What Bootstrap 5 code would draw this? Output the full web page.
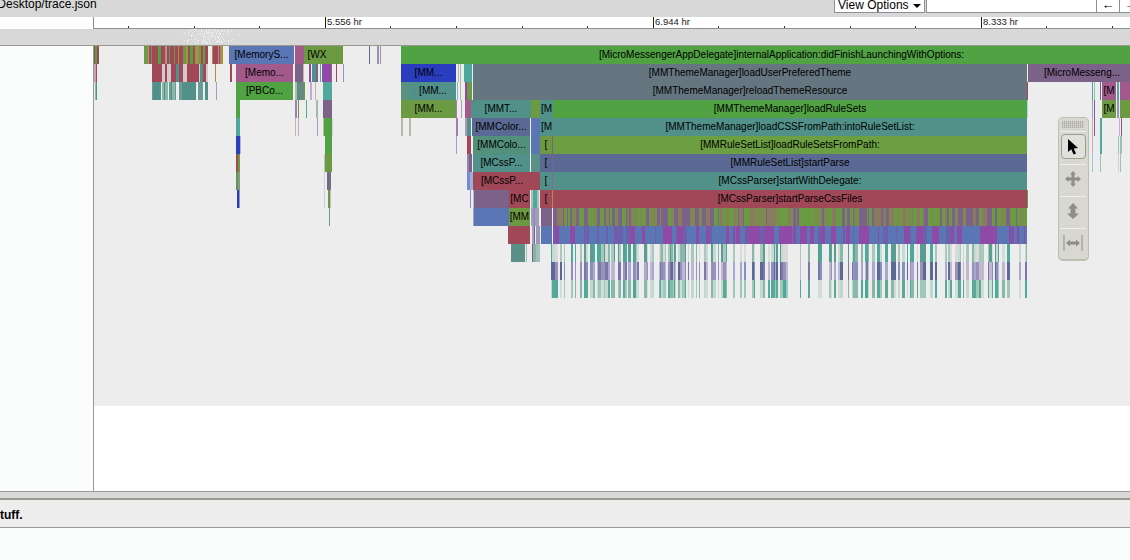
<!DOCTYPE html>
<html lang="en">
<head>
  <meta charset="UTF-8" />
  <title>trace.json</title>
  <link href="https://cdn.jsdelivr.net/npm/bootstrap@5.3.0/dist/css/bootstrap.min.css" rel="stylesheet" />
  <style>
    html, body { height: 560px; overflow: hidden; }
    body { font-family: "Liberation Sans", Arial, sans-serif; background: #fbfdfc; color: #000; }
    .tr-head { height: 17px; background: #d8d8d8; overflow: hidden; }
    .tr-file { font-size: 12px; line-height: 17px; margin-left: -6px; margin-top: -4px; white-space: nowrap; }
    .tr-actions { margin-right: -12px; flex: none; }
    .tr-opts { width: 91px; height: 17px; margin-top: -4px; padding: 0; font-size: 12px; line-height: 14px; border: 1px solid #8a9098; border-radius: 0; background: #fff; color: #000; flex: none; }
    .tr-search { width: 170px; height: 17px; margin-top: -4px; margin-left: 1px; border: 1px solid #8a9098; border-right: 0; border-radius: 0; background: #fff; padding: 0; flex: none; }
    .tr-step { width: 23px; height: 17px; margin-top: -4px; padding: 0; font-size: 13px; line-height: 14px; border: 1px solid #8a9098; border-right: 0; border-radius: 0; background: #fff; color: #000; flex: none; }
    .tr-caret { display: inline-block; border-top: 4px solid #000; border-left: 4px solid transparent; border-right: 4px solid transparent; vertical-align: 1px; margin-left: 1px; }
    .tr-ruler-row { height: 12px; background: #fff; }
    .tr-ruler-gap { width: 93px; flex: none; }
    .tr-ruler { border-left: 1px solid #8a8a84; border-bottom: 1px solid #8a9098; overflow: hidden; }
    .tr-tick { position: absolute; bottom: 0; width: 1px; height: 2px; background: #333; }
    .tr-tick-major { height: 11px; background: #222; }
    .tr-tick-label { position: absolute; top: -1px; font-size: 9.5px; line-height: 12px; color: #222; }
    .tr-overview { height: 17px; background: #d8d8d8; border-bottom: 1px solid #9c9a90; overflow: hidden; }
    .tr-dot { position: absolute; width: 1px; height: 1px; background: #ececec; }
    .tr-main { height: 445px; }
    .tr-gutter { width: 93px; flex: none; background: #fbfdfc; border-right: 1px solid #9c9a90; box-sizing: content-box; }
    .tr-canvas { background: #fff; overflow: hidden; }
    .tr-track { height: 360px; background: #ededed; }
    .tr-slice { position: absolute; height: 18px; font-size: 10px; line-height: 18px; text-align: center; white-space: nowrap; overflow: hidden; color: #000; }
    .tr-tools { position: absolute; left: 964px; top: 71px; width: 31px; height: 144px; background: #d8d8d0; border: 1px solid #bcc0b0; border-bottom-width: 2px; border-radius: 5px; padding: 1px 2px 0 1px; }
    .tr-grip { height: 7px; margin: 2px 2px 3px; flex: none; background-image: repeating-linear-gradient(90deg, #b4b4ac 0 1px, transparent 1px 2px), repeating-linear-gradient(0deg, #c8c8c0 0 1px, transparent 1px 2px); }
    .tr-tool { height: 32px; flex: none; border-top: 1px solid #f0f0ea; padding-bottom: 3px; }
    .tr-tool-first { height: 33px; padding: 2px 0 0; }
    .tr-tool-on { border: 1px solid #9c9e8c; border-radius: 4px; background: #dfe1da; width: 25px; height: 25px; }
    .tr-split { height: 9px; background: #d8d8d8; border-top: 1px solid #9c9a90; border-bottom: 2px solid #9c9890; }
    .tr-panel-head { height: 28px; background: #ededed; border-bottom: 1px solid #9c9a90; font-size: 12px; font-weight: 700; line-height: 30px; overflow: hidden; }
    .tr-panel-head span { margin-left: -8px; }
  </style>
</head>
<body>
  <div class="tr-head d-flex">
    <div class="tr-file">/Desktop/trace.json</div>
    <div class="d-flex ms-auto tr-actions">
      <button type="button" class="tr-opts">View Options <span class="tr-caret"></span></button>
      <input type="text" class="tr-search" aria-label="Search" />
      <button type="button" class="tr-step">←</button>
      <button type="button" class="tr-step">→</button>
    </div>
  </div>

  <div class="tr-ruler-row d-flex">
    <div class="tr-ruler-gap"></div>
    <div id="ruler" class="tr-ruler position-relative flex-grow-1"></div>
  </div>

  <div id="overview" class="tr-overview position-relative"></div>

  <div class="tr-main d-flex">
    <div class="tr-gutter"></div>
    <div class="tr-canvas position-relative flex-grow-1">
      <div id="track" class="tr-track position-relative"></div>
      <div class="tr-tools d-flex flex-column">
        <div class="tr-grip"></div>
        <div class="tr-tool tr-tool-first d-flex justify-content-center">
          <div class="tr-tool-on d-flex align-items-center justify-content-center">
            <svg width="14" height="18" viewBox="0 0 14 18"><path d="M2 1 L2 14 L5.2 11.2 L7.6 16.5 L10 15.4 L7.7 10.4 L12 10 Z" fill="#000"/></svg>
          </div>
        </div>
        <div class="tr-tool d-flex align-items-center justify-content-center">
          <svg width="18" height="18" viewBox="0 0 18 18"><path d="M9 1 L12 4.5 H10.5 V7.5 H13.5 V6 L17 9 L13.5 12 V10.5 H10.5 V13.5 H12 L9 17 L6 13.5 H7.5 V10.5 H4.5 V12 L1 9 L4.5 6 V7.5 H7.5 V4.5 H6 Z" fill="#8e8e84"/></svg>
        </div>
        <div class="tr-tool d-flex align-items-center justify-content-center">
          <svg width="14" height="18" viewBox="0 0 14 18"><path d="M7 1 L12 6.5 H9.5 V11.5 H13 L7 17 L1 11.5 H4.5 V6.5 H2 Z" fill="#8e8e84"/></svg>
        </div>
        <div class="tr-tool d-flex align-items-center justify-content-center">
          <svg width="20" height="16" viewBox="0 0 20 16"><path d="M1 0 V16 M19 0 V16" stroke="#8e8e84" fill="none"/><path d="M3 8 L7 4.5 V6.5 H13 V4.5 L17 8 L13 11.5 V9.5 H7 V11.5 Z" fill="#8e8e84"/></svg>
        </div>
      </div>
    </div>
  </div>

  <div class="tr-split"></div>
  <div class="tr-panel-head"><span>Stuff.</span></div>

  <script>
    // colours of the trace viewer
    const green = '#50a243', olive = '#6c9a42', red = '#a04858', pink = '#a2598c', purple = '#8f4aa8';
    const blue = '#5a76b4', navy = '#5a6a94', deep = '#2a3dbf', teal = '#52908a', aqua = '#4ea89b';
    const slate = '#667680', plum = '#7c6288', tan = '#bbb8a6', ochre = '#a89048';

    // [row, from x, to x, colour, label]
    // the two slices that run off the right edge go on past it, their labels stay centred on the full width
    const slices = [
      [0, 229, 294, blue, '[MemoryS...'], [0, 295, 304, pink], [0, 304, 330, olive, '[WX'], [0, 330, 343, olive],
      [0, 369, 370, navy], [0, 377, 379, '#9a90b0'], [0, 380, 381, '#9a90b0'],
      [0, 401, 1162, green, '[MicroMessengerAppDelegate]internalApplication:didFinishLaunchingWithOptions:'],

      [1, 236, 293, pink, '[Memo...'], [1, 295, 303, plum], [1, 303, 304, tan], [1, 309, 311, purple], [1, 312, 316, teal], [1, 316, 318, plum],
      [1, 320, 321, aqua], [1, 322, 331, purple], [1, 331, 332, pink], [1, 336, 337, red], [1, 343, 344, '#9a90c0'], [1, 230, 232, red], [1, 215, 216, ochre],
      [1, 401, 456, deep, '[MM...'], [1, 458, 459, tan], [1, 460, 461, '#9ac0b0'], [1, 464, 472, aqua],
      [1, 473, 1027, slate, '[MMThemeManager]loadUserPreferedTheme'], [1, 1028, 1136, plum, '[MicroMesseng...'],

      [2, 216, 217, '#a89cc0'], [2, 236, 293, green, '[PBCo...'], [2, 295, 297, tan], [2, 297, 300, teal], [2, 300, 304, '#6a8a80'], [2, 304, 305, olive], [2, 310, 312, '#c8a8d0'], [2, 315, 316, tan], [2, 323, 332, aqua],
      [2, 401, 410, '#5c9080'], [2, 410, 456, teal, '[MM...'], [2, 457, 458, '#88b8d8'], [2, 460, 461, tan], [2, 465, 467, purple], [2, 467, 472, olive],
      [2, 473, 1027, slate, '[MMThemeManager]reloadThemeResource'], [2, 1027, 1028, red], [2, 1092, 1093, aqua], [2, 1094, 1095, '#9ac0b0'], [2, 1100, 1101, navy], [2, 1102, 1116, pink, '[M'], [2, 1117, 1119, aqua], [2, 1120, 1130, pink],

      [3, 236, 240, green], [3, 295, 297, '#a080b0'], [3, 298, 299, olive], [3, 306, 307, aqua], [3, 316, 318, '#a0b8b0'], [3, 323, 332, plum],
      [3, 401, 456, olive, '[MM...'], [3, 456, 457, '#a878b8'], [3, 461, 462, '#a89cb8'], [3, 465, 471, pink], [3, 471, 531, teal, '[MMT...'], [3, 531, 540, olive], [3, 540, 553, teal, '[M'],
      [3, 553, 1027, green, '[MMThemeManager]loadRuleSets'], [3, 1027, 1028, '#a8d8e0'], [3, 1092, 1093, '#98a0d8'], [3, 1094, 1095, plum], [3, 1102, 1116, olive, '[M'], [3, 1117, 1119, '#9a90c0'], [3, 1120, 1130, olive],

      [4, 236, 240, aqua], [4, 295, 296, tan], [4, 298, 299, '#c8a8d0'], [4, 317, 318, '#a89cb8'], [4, 323, 324, tan], [4, 324, 332, green], [4, 332, 333, '#d8d0e0'],
      [4, 401, 403, tan], [4, 409, 411, tan], [4, 456, 458, '#a878b8'], [4, 465, 467, '#a89cb8'], [4, 467, 471, teal], [4, 472, 530, navy, '[MMColor...'], [4, 531, 540, blue], [4, 540, 553, teal, '[M'],
      [4, 553, 1027, teal, '[MMThemeManager]loadCSSFromPath:intoRuleSetList:'], [4, 1092, 1093, '#c8a8d0'], [4, 1094, 1095, plum], [4, 1100, 1102, aqua], [4, 1119, 1120, '#c8a8d0'], [4, 1121, 1122, plum],

      [5, 236, 240, deep], [5, 240, 241, '#c0b0d0'], [5, 325, 332, green], [5, 456, 457, '#a89cc8'], [5, 467, 471, red], [5, 473, 530, '#52907a', '[MMColo...'], [5, 531, 540, blue], [5, 540, 552, olive, '['], [5, 552, 553, plum],
      [5, 553, 1027, '#6c9e42', '[MMRuleSetList]loadRuleSetsFromPath:'], [5, 1092, 1093, '#c8a8d0'], [5, 1100, 1102, aqua], [5, 1118, 1119, '#a0c0b0'], [5, 1120, 1122, '#a0c0b0'],

      [6, 236, 238, red], [6, 238, 240, olive], [6, 324, 325, '#c0c0c0'], [6, 325, 332, olive], [6, 467, 469, '#9a80b0'], [6, 469, 472, plum], [6, 473, 530, teal, '[MCssP...'], [6, 531, 540, '#5a9088'], [6, 540, 552, navy, '['], [6, 552, 553, plum],
      [6, 553, 1027, navy, '[MMRuleSetList]startParse'], [6, 1092, 1093, '#a8c0e0'], [6, 1100, 1101, '#a0c0b0'], [6, 1118, 1119, '#c8d8d0'], [6, 1120, 1121, '#a0c0b0'],

      [7, 236, 238, green], [7, 238, 240, '#909090'], [7, 324, 325, '#d0d0d0'], [7, 327, 329, plum], [7, 329, 331, slate], [7, 467, 470, '#7a88d0'], [7, 470, 473, '#9ab0d8'], [7, 473, 531, red, '[MCssP...'], [7, 531, 540, red], [7, 540, 552, teal, '['], [7, 552, 553, pink],
      [7, 553, 1027, teal, '[MCssParser]startWithDelegate:'],

      [8, 237, 239, deep], [8, 239, 240, '#8a90c0'], [8, 324, 325, '#c8d0e8'], [8, 328, 330, olive], [8, 330, 331, '#c0c0b0'], [8, 470, 471, '#8a90d8'], [8, 473, 474, '#c0b8c8'], [8, 474, 509, plum], [8, 509, 530, red, '[MC'], [8, 531, 533, '#a8c0b8'], [8, 533, 537, aqua], [8, 537, 539, '#a8c0b8'], [8, 540, 552, red, '['], [8, 552, 553, ochre],
      [8, 553, 1027, red, '[MCssParser]startParseCssFiles'], [8, 1027, 1028, olive],

      [9, 329, 330, aqua], [9, 473, 474, '#a89cb8'], [9, 474, 509, blue], [9, 509, 530, olive, '[MM'], [9, 531, 533, '#a89cc0'], [9, 533, 535, '#8a90c0'], [9, 535, 539, '#a09cb8'], [9, 541, 552, plum],
      [10, 508, 530, red], [10, 532, 534, '#a0a0c0'], [10, 534, 535, plum], [10, 536, 540, '#9a98b8'], [10, 541, 552, blue],
      [11, 511, 525, '#5a9088'], [11, 526, 527, '#a0c0b0'], [11, 532, 533, plum], [11, 533, 536, '#8ab0a8'], [11, 536, 540, '#a0c0b8']
    ];

    // tiny seeded generator so the dense stripes come out the same each run
    function makeRandom(seed) {
      return () => {
        seed = (seed * 1664525 + 1013904223) % 4294967296;
        return seed / 4294967296;
      };
    }

    const track = document.getElementById('track');

    function addSlice(row, from, to, colour, label) {
      const el = document.createElement('div');
      el.className = 'tr-slice';
      el.style.top = row * 18 + 'px';
      el.style.left = from - 94 + 'px';
      el.style.width = to - from + 'px';
      el.style.background = colour;
      if (label) el.textContent = label;
      track.appendChild(el);
    }

    // dense run of thin slices, colours picked from a palette
    function addStripes(row, from, to, palette, seed, maxStep) {
      const random = makeRandom(seed);
      let x = from;
      while (x < to) {
        const w = 1 + Math.floor(random() * maxStep);
        addSlice(row, x, Math.min(x + w, to), palette[Math.floor(random() * palette.length)]);
        x += w;
      }
    }

    addSlice(0, 94, 95, red); addSlice(0, 95, 97, green); addSlice(0, 97, 99, red);
    addSlice(1, 94, 96, '#c8a0b0'); addSlice(1, 96, 97, red);
    addSlice(2, 95, 96, '#88b8c0'); addSlice(2, 96, 97, teal);
    addStripes(0, 144, 208, [red, red, red, red, red, ochre, green, '#c08898', olive], 7, 4);
    addStripes(0, 212, 223, [red, ochre, '#c08898', red], 11, 3);
    addStripes(1, 152, 208, [red, red, red, red, '#d8c8cc', '#c08898', teal], 13, 4);
    addStripes(2, 152, 208, [teal, teal, '#8ab8a8', '#ededed', '#6a9c98', aqua], 17, 3);

    slices.forEach(s => addSlice(s[0], s[1], s[2], s[3], s[4]));

    addStripes(9, 553, 1027, [olive, olive, plum, plum, '#8a7a60', '#7c8a50'], 23, 4);
    addStripes(10, 553, 1027, [blue, blue, blue, blue, purple, purple, '#6a60ac'], 29, 5);

    // the three deep rows share their columns, only the shades differ
    const deepRandom = makeRandom(31);
    const rowShades = [
      [aqua, '#5a9c90', '#8ab8a8', '#a8c8bc', '#c8d8d2', '#d8dcd8'],
      [navy, '#7a78a8', '#9a90b8', '#a8a8d0', '#c0b8d0', '#8890c0'],
      [aqua, '#5aa898', '#8ab8a8', '#a0c8b8', '#c0d8ce', '#d0dcd6']
    ];
    for (let x = 551; x < 1027;) {
      const w = 1 + Math.floor(deepRandom() * 3);
      if (x < 553 || deepRandom() > 0.3) {
        rowShades.forEach((shades, i) => addSlice(11 + i, x, Math.min(x + w, 1027), shades[Math.floor(deepRandom() * shades.length)]));
      }
      x += w + (deepRandom() > 0.7 ? 2 : 0);
    }

    // ruler: one major tick every 328 px, five divisions in between
    const ruler = document.getElementById('ruler');
    for (let i = 0; i * 65.6 + 34 < 1036; i++) {
      const tick = document.createElement('div');
      tick.className = i % 5 === 3 ? 'tr-tick tr-tick-major' : 'tr-tick';
      tick.style.left = Math.round(i * 65.6 + 34) + 'px';
      ruler.appendChild(tick);
    }
    [[233, '5.556 hr'], [561, '6.944 hr'], [889, '8.333 hr']].forEach(([left, text]) => {
      const label = document.createElement('div');
      label.className = 'tr-tick-label';
      label.style.left = left + 'px';
      label.textContent = text;
      ruler.appendChild(label);
    });

    // speckle on the overview strip
    const overview = document.getElementById('overview');
    const dotRandom = makeRandom(41);
    for (let i = 0; i < 220; i++) {
      const dot = document.createElement('div');
      dot.className = 'tr-dot';
      const spread = (dotRandom() + dotRandom()) / 2;
      dot.style.left = 178 + spread * 62 + 'px';
      dot.style.top = Math.floor(dotRandom() * 15) + 'px';
      overview.appendChild(dot);
    }
  </script>
  <script src="https://cdn.jsdelivr.net/npm/bootstrap@5.3.0/dist/js/bootstrap.bundle.min.js"></script>
</body>
</html>
